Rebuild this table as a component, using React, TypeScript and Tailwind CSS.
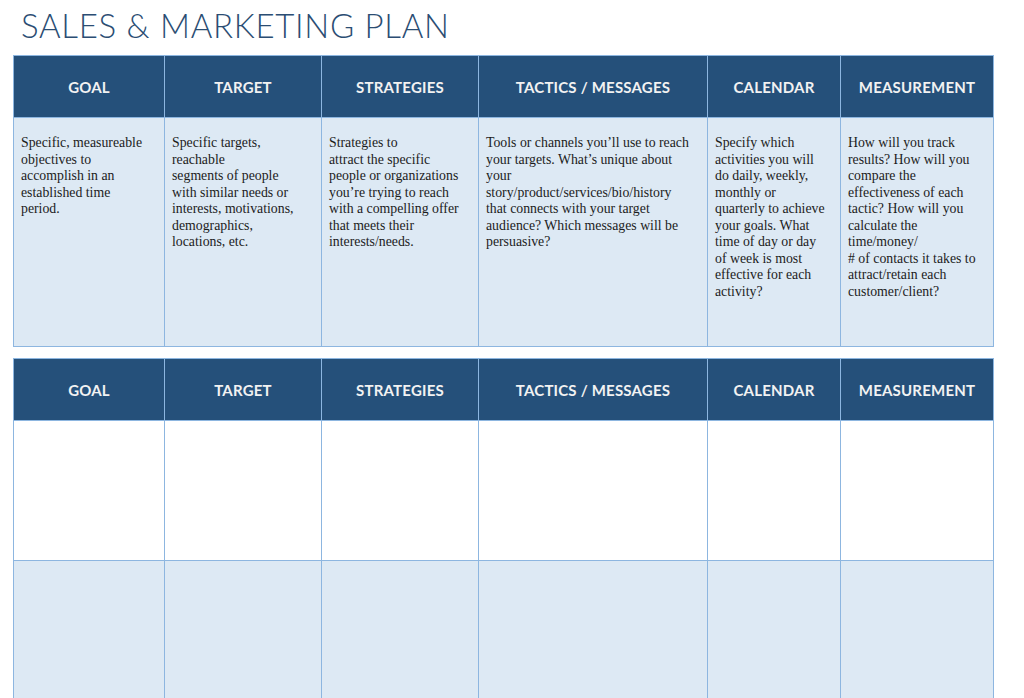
import React from "react";

const COLS = [
  { title: "GOAL", w: "w-[151px]" },
  { title: "TARGET", w: "w-[157px]" },
  { title: "STRATEGIES", w: "w-[157px]" },
  { title: "TACTICS / MESSAGES", w: "w-[229px]" },
  { title: "CALENDAR", w: "w-[133px]" },
  { title: "MEASUREMENT", w: "w-[153px]" },
];

const HINTS: string[][] = [
  ["Specific, measureable", "objectives to", "accomplish in an", "established time", "period."],
  [
    "Specific targets,",
    "reachable",
    "segments of people",
    "with similar needs or",
    "interests, motivations,",
    "demographics,",
    "locations, etc.",
  ],
  [
    "Strategies to",
    "attract the specific",
    "people or organizations",
    "you’re trying to reach",
    "with a compelling offer",
    "that meets their",
    "interests/needs.",
  ],
  [
    "Tools or channels you’ll use to reach",
    "your targets. What’s unique about",
    "your",
    "story/product/services/bio/history",
    "that connects with your target",
    "audience? Which messages will be",
    "persuasive?",
  ],
  [
    "Specify which",
    "activities you will",
    "do daily, weekly,",
    "monthly or",
    "quarterly to achieve",
    "your goals. What",
    "time of day or day",
    "of week is most",
    "effective for each",
    "activity?",
  ],
  [
    "How will you track",
    "results? How will you",
    "compare the",
    "effectiveness of each",
    "tactic? How will you",
    "calculate the",
    "time/money/",
    "# of contacts it takes to",
    "attract/retain each",
    "customer/client?",
  ],
];

function HeaderRow() {
  return (
    <tr className="h-[62px] bg-[#25507a]">
      {COLS.map((c) => (
        <th
          key={c.title}
          className={`${c.w} border border-[#8db6e0] pt-[2px] text-center align-middle font-['Lato',sans-serif] text-[15px] font-bold tracking-[0.2px] text-[#f2f2f2]`}
        >
          {c.title}
        </th>
      ))}
    </tr>
  );
}

export default function App() {
  return (
    <div className="h-[698px] w-[1024px] overflow-hidden bg-white">
      <h1 className="pl-[21px] pt-[5px] font-['Lato',sans-serif] text-[33px] font-light leading-[40px] tracking-[0.7px] text-[#2b4d73]">
        SALES &amp; MARKETING PLAN
      </h1>

      <table className="ml-[13px] mt-[10px] table-fixed border-collapse">
        <tbody>
          <HeaderRow />
          <tr className="h-[229px] bg-[#dde9f4]">
            {HINTS.map((lines, i) => (
              <td
                key={i}
                className="border border-[#8db6e0] px-[7px] pt-[17px] align-top font-['Liberation_Serif',serif] text-[13.8px] leading-[16.5px] text-[#1c1c1c]"
              >
                {lines.map((l, j) => (
                  <div key={j} className="whitespace-nowrap">
                    {l}
                  </div>
                ))}
              </td>
            ))}
          </tr>
        </tbody>
      </table>

      <table className="ml-[13px] mt-[11px] table-fixed border-collapse">
        <tbody>
          <HeaderRow />
          <tr className="h-[140px] bg-white">
            {COLS.map((c) => (
              <td key={c.title} className="border border-[#8db6e0]" />
            ))}
          </tr>
          <tr className="h-[140px] bg-[#dde9f4]">
            {COLS.map((c) => (
              <td key={c.title} className="border border-[#8db6e0]" />
            ))}
          </tr>
        </tbody>
      </table>
    </div>
  );
}
